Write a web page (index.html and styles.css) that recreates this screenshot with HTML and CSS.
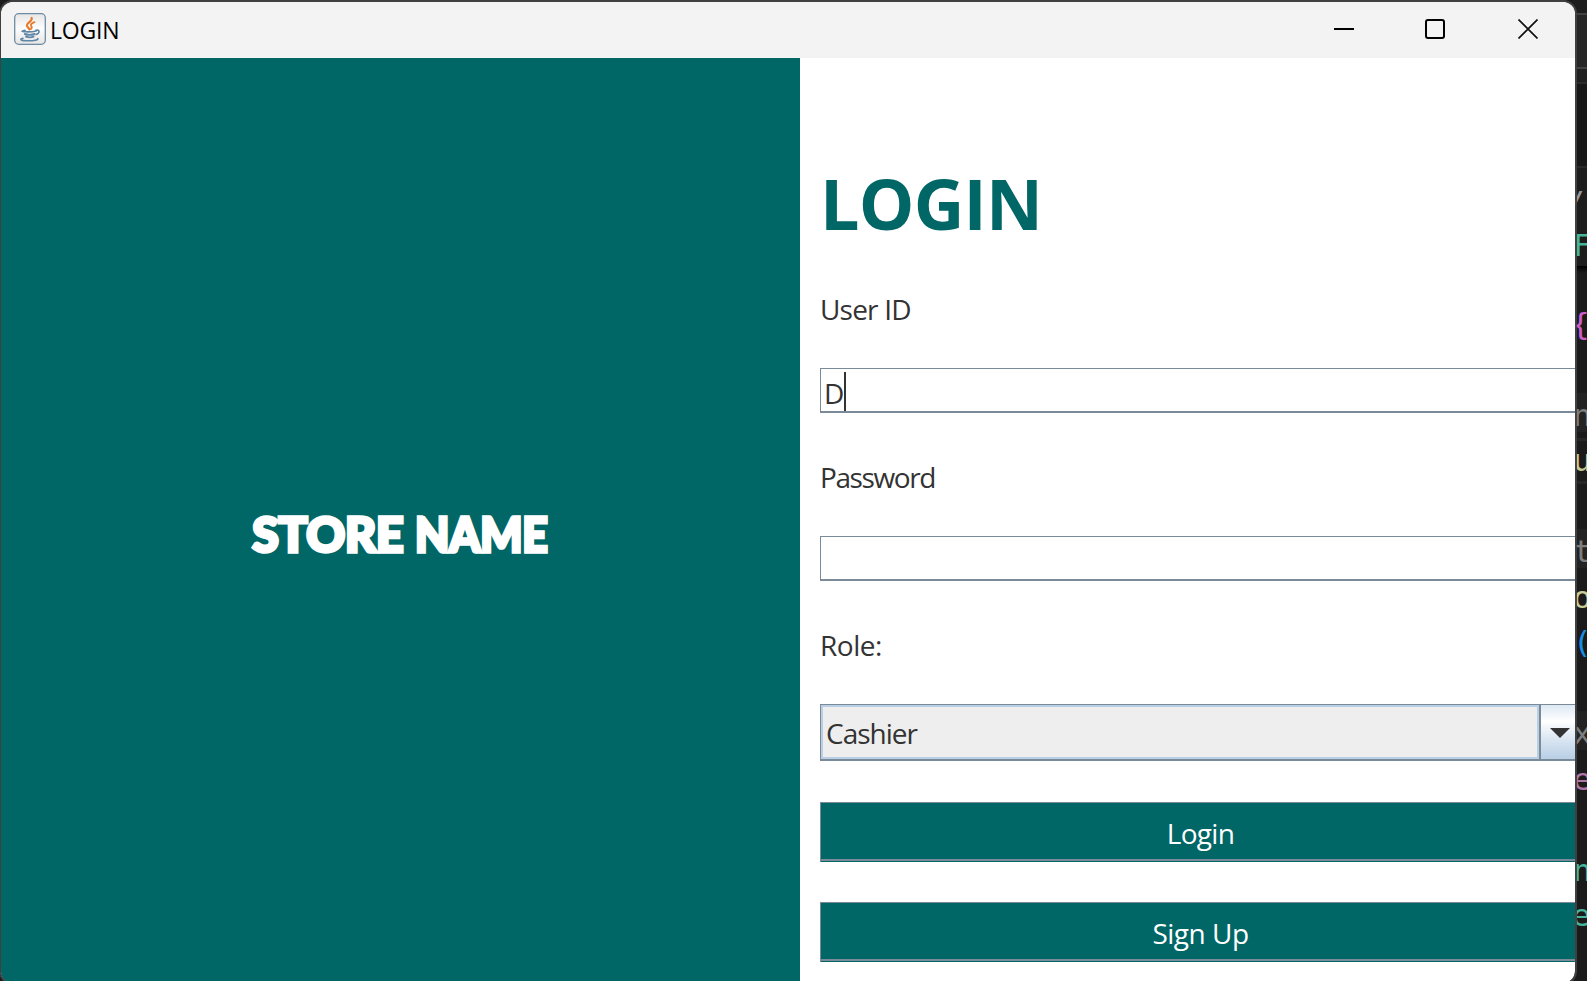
FILE: index.html
```html
<!DOCTYPE html>
<html lang="en">
<head>
<meta charset="utf-8">
<title>LOGIN</title>
<link rel="stylesheet" href="styles.css">
</head>
<body>
<div class="desktop">
  <div class="editor">
    <div class="tabs"></div>
    <div class="ribbon"></div>
    <div class="gap"></div>
    <div class="head">
      <span class="code slash">/</span>
      <span class="code teal">F</span>
    </div>
    <div class="lines">
      <span class="code first"></span>
      <span class="code pink">{</span>
      <span class="code"></span>
      <span class="code dim">n</span>
      <span class="code sand current">u</span>
      <span class="code"></span>
      <span class="code dim tee">t</span>
      <span class="code sand">o</span>
      <span class="code blue">(</span>
      <span class="code"></span>
      <span class="code dim">x</span>
      <span class="code mauve">e</span>
      <span class="code"></span>
      <span class="code teal">n</span>
      <span class="code teal low">e</span>
    </div>
  </div>
  <div class="window">
    <header class="titlebar">
      <svg class="java" width="32" height="32" viewBox="0 0 32 32">
        <defs><linearGradient id="tile" x1="0" y1="0" x2="0" y2="1"><stop offset="0" stop-color="#e6e6e6"/><stop offset=".5" stop-color="#fdfdfd"/><stop offset="1" stop-color="#e4e4e4"/></linearGradient></defs>
        <rect x=".7" y=".7" width="30.6" height="30.6" rx="4" fill="url(#tile)" stroke="#6d8ba3" stroke-width="1.3"/>
        <g fill="none" stroke="#e9792b" stroke-linecap="round">
          <path d="M17.600 5c1.400 3-4.700 4.600-4.700 7.200 0 1.700 1.600 2.700 2.600 4.100" stroke-width="2.200"/>
          <path d="M20.500 9.200c-3 1-4.300 2.400-3.300 3.900 1 1.300.5 2.200-.4 3" stroke-width="1.800"/>
        </g>
        <g fill="none" stroke="#5f86a5" stroke-linecap="round">
          <path d="M11 17.300c-3.800.6-4.200 1.300.2 1.500 4 .2 8 0 11-.9" stroke-width="1.600"/>
          <path d="M10.800 21c2.800 1 7.200.9 9.900 0M12 23.700c2.200.8 5.500.8 7.600 0" stroke-width="1.900"/>
          <path d="M22 17.300c3.700-1.100 4.300 2.600.2 4.300" stroke-width="1.600"/>
          <path d="M9 25.300c-4.200 1.100-2 2.400 5.100 2.500 5.500.1 10.500-.9 9.800-2.300" stroke-width="1.600"/>
        </g>
      </svg>
      <span class="caption">LOGIN</span>
      <div class="controls">
        <svg width="20" height="20" viewBox="0 0 20 20"><path d="M0 10h20" stroke="#000" stroke-width="2"/></svg>
        <svg width="20" height="20" viewBox="0 0 20 20"><rect x="1" y="1" width="18" height="18" rx="2" fill="none" stroke="#000" stroke-width="2"/></svg>
        <svg class="close" width="20" height="20" viewBox="0 0 20 20"><path d="M.5.500l19 19M19.500.500l-19 19" stroke="#111" stroke-width="1.700"/></svg>
      </div>
    </header>
    <main class="content">
      <section class="brand"><div class="store"><span>STORE</span> <span class="name">NAME</span></div></section>
      <section class="form">
        <h1 class="heading">LOGIN</h1>
        <div class="label user">User ID</div>
        <div class="field"><span class="value">D</span><span class="caret"></span></div>
        <div class="label pass">Password</div>
        <div class="field"></div>
        <div class="label role">Role:</div>
        <div class="combo">
          <div class="choice"><span class="cashier">Cashier</span></div>
          <div class="arrow"><svg width="20" height="10" viewBox="0 0 20 10"><path d="M0 0h20L10 10z" fill="#333"/></svg></div>
        </div>
        <div class="button"><span class="login">Login</span></div>
        <div class="button"><span class="signup">Sign Up</span></div>
      </section>
    </main>
  </div>
</div>
</body>
</html>
```
FILE: styles.css
```css
* { box-sizing: border-box; }
body { margin: 0; overflow: hidden; background: #1b1b1b; font-family: "Open Sans", "Noto Sans", sans-serif; }
.desktop { position: relative; width: 1587px; height: 981px; overflow: hidden; background: #1b1b1b; }

.editor { width: 14px; height: 981px; margin-left: auto; overflow: hidden; }
.tabs { height: 15px; border-bottom: 2px solid #424242; background: #1d1d1d; }
.ribbon { height: 54px; border-bottom: 2px solid #424242; background: #262626; }
.gap { height: 99px; border-bottom: 2px solid #2a2a2a; background: linear-gradient(#202020 0 13px, #2b2b2b 13px 15px, #181818 15px); }
.head { height: 98px; padding-top: 10px; background: #1d1d1d; }
.head .code { height: 45px; line-height: 45px; }
.lines { height: 715px; background: linear-gradient(#000, #1b1b1b 7px); }
.code { display: block; height: 45.5px; padding-left: 1px; line-height: 45.5px; font-family: "DejaVu Sans Mono", monospace; font-size: 31px; white-space: nowrap; }
.lines .first { height: 35.5px; }
.head .slash { color: #999; margin-left: -8px; line-height: 49px; }
.teal { color: #45b69b; margin-left: -1px; }
.low { margin-left: -2px; }
.pink { color: #cf5fce; margin-left: -3px; }
.dim { color: #7d7d7d; margin-left: -1px; background: linear-gradient(#232323 39px, transparent 39px); }
.tee { margin-left: -1px; }
.sand { color: #cccb94; margin-left: -1px; }
.current { border-top: 3px solid #272727; border-bottom: 3px solid #272727; line-height: 39.5px; }
.blue { color: #168ee8; margin-left: -1px; }
.mauve { color: #b173a8; margin-left: -1px; }

.window { position: absolute; left: -1px; top: 0; width: 1578px; height: 985px; border: 2px solid rgba(67, 67, 67, .93); border-radius: 14px; overflow: hidden; background: #fff; background-clip: padding-box; }
.titlebar { display: flex; height: 56px; padding: 0 37px 0 13px; background: #f3f3f3; }
.java { margin-top: 11px; }
.caption { margin-left: 4px; line-height: 57px; font-size: 23px; color: #000; letter-spacing: -0.2px; }
.controls { display: flex; gap: 71px; margin: 17px 0 0 auto; }
.controls svg { display: block; }
.controls .close { margin-left: 2px; }

.content { display: flex; height: 925px; }
.brand { flex: none; display: flex; align-items: center; justify-content: center; width: 799px; background: #006666; }
.store { display: flex; gap: 12px; margin: 26px 2px 0 0; color: #fff; font-family: Lato, sans-serif; font-weight: 900; font-size: 48px; line-height: 60px; letter-spacing: -0.2px; -webkit-text-stroke: 3.5px #fff; white-space: nowrap; }
.name { transform: scaleX(.925); transform-origin: left; margin-right: -12px; }
.form { flex: none; width: 780px; padding-left: 20px; color: #333; font-size: 28px; white-space: nowrap; }
.heading { height: 90px; margin: 100px 0 0; line-height: 90px; font-size: 70px; font-weight: 700; letter-spacing: -0.8px; color: #006666; }
.label { height: 40px; line-height: 40px; }
.user { margin-top: 41px; margin-bottom: 39px; letter-spacing: -0.8px; }
.pass, .role { margin-top: 44px; margin-bottom: 39px; }
.pass { letter-spacing: -1.4px; }
.role { letter-spacing: -0.5px; }
.field { display: flex; height: 45px; padding: 3px 0 0 3px; border: solid #7a8a99; border-width: 1px 0 2px 1px; }
.value { width: 20px; line-height: 42px; }
.caret { width: 2px; height: 39px; background: #333; }
.combo { display: flex; height: 57px; border: solid #7a8a99; border-width: 1px 0 2px 1px; }
.choice { width: 718px; border: 2px solid #b8cfe5; padding-left: 3px; line-height: 53px; letter-spacing: -1px; background: #eee; }
.arrow { display: flex; align-items: center; flex: 1; padding: 2px 0 0 9px; border-left: 2px solid #7a8a99; background: linear-gradient(#dde8f3, #fff 30%, #dde8f3 60%, #b8cfe5); }
.button { height: 60px; margin-top: 41px; line-height: 61px; color: #fff; text-align: center; background: #006666; border: solid #7a8a99; border-width: 1px 0 0 1px; box-shadow: inset 0 -1px #006666, inset 0 -3px #7a8a99; }
.button + .button { margin-top: 40px; }
.login { letter-spacing: -0.7px; }
.signup { letter-spacing: -0.5px; }
```
